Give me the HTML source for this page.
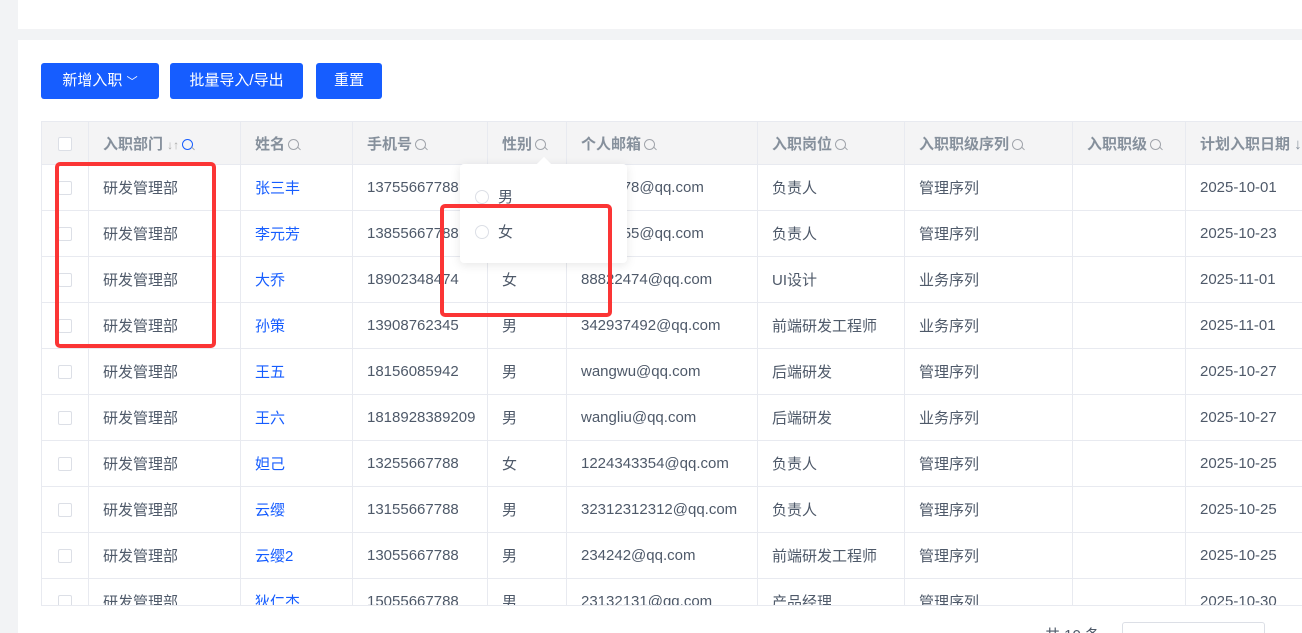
<!DOCTYPE html>
<html><head><meta charset="utf-8"><style>
*{box-sizing:border-box;margin:0;padding:0}
html,body{width:1302px;height:633px;overflow:hidden}
body{background:#f2f3f5;font-family:"Liberation Sans","Noto Sans CJK SC",sans-serif;font-size:15px;color:#4e5969;position:relative}
.top{position:absolute;left:18px;top:0;width:1284px;height:29px;background:#fff}
.card{position:absolute;left:18px;top:40px;width:1284px;height:593px;background:#fff}
.btn{position:absolute;top:63px;height:36px;background:#165dff;color:#fff;border-radius:3px;font-size:15px;line-height:36px;text-align:center}
table{border-collapse:collapse;table-layout:fixed;width:1274px}
td,th{border:1px solid #e8eaf0;height:46px;padding:0 0 0 14px;text-align:left;white-space:nowrap;overflow:hidden;font-weight:normal}
th{background:#f4f4f5;height:43px;color:#86909c;font-weight:bold}
td.l{color:#165dff}
.cb{display:inline-block;width:14px;height:14px;border:1px solid #dcdfe6;border-radius:2px;background:#fff;vertical-align:middle}
.q{display:inline-block;width:11px;height:11px;border:1.3px solid #a0a4ab;border-radius:50%;margin-left:3px;vertical-align:-1px;position:relative}
.q:after{content:"";position:absolute;width:4px;height:1.3px;background:#a0a4ab;right:-3px;bottom:-1px;transform:rotate(45deg)}
.clip{position:absolute;left:41px;top:121px;width:1261px;height:485px;overflow:hidden}
.pop{position:absolute;left:460px;top:164px;width:167px;height:99px;background:#fff;border-radius:4px;box-shadow:0 2px 10px rgba(0,0,0,.1)}
.pop:before{content:"";position:absolute;left:79px;top:-5px;width:10px;height:10px;background:#fff;transform:rotate(45deg)}
.r{position:absolute;left:15px;font-size:15px;color:#4e5969}
.r i{display:inline-block;width:14px;height:14px;border:1px solid #dcdfe6;border-radius:50%;vertical-align:-2px;margin-right:9px}
.red{position:absolute;border:4px solid #fb3535;border-radius:5px}
</style></head><body>
<div class="top"></div>
<div class="card"></div>
<div class="btn" style="left:41px;width:118px">新增入职 <span style="font-size:11px">﹀</span></div>
<div class="btn" style="left:170px;width:133px">批量导入/导出</div>
<div class="btn" style="left:316px;width:66px">重置</div>
<div class="clip"><table>
<colgroup><col style="width:47px"><col style="width:152px"><col style="width:112px"><col style="width:135px"><col style="width:79px"><col style="width:191px"><col style="width:147px"><col style="width:168px"><col style="width:113px"><col style="width:130px"></colgroup>
<tr><th style="padding-left:16px"><span class="cb"></span></th><th>入职部门 <span style="font-weight:normal;font-size:12px;color:#aaa">↓↑</span><span class="q" style="border-color:#165dff"></span></th><th>姓名<span class="q"></span></th><th>手机号<span class="q"></span></th><th>性别<span class="q"></span></th><th>个人邮箱<span class="q"></span></th><th>入职岗位<span class="q"></span></th><th>入职职级序列<span class="q"></span></th><th>入职职级<span class="q"></span></th><th>计划入职日期 ↓</th></tr>
<tr><td style="padding-left:16px"><span class="cb"></span></td><td>研发管理部</td><td class="l">张三丰</td><td>13755667788</td><td>男</td><td>5645678@qq.com</td><td>负责人</td><td>管理序列</td><td></td><td>2025-10-01</td></tr>
<tr><td style="padding-left:16px"><span class="cb"></span></td><td>研发管理部</td><td class="l">李元芳</td><td>13855667788</td><td>女</td><td>3455455@qq.com</td><td>负责人</td><td>管理序列</td><td></td><td>2025-10-23</td></tr>
<tr><td style="padding-left:16px"><span class="cb"></span></td><td>研发管理部</td><td class="l">大乔</td><td>18902348474</td><td>女</td><td>88822474@qq.com</td><td>UI设计</td><td>业务序列</td><td></td><td>2025-11-01</td></tr>
<tr><td style="padding-left:16px"><span class="cb"></span></td><td>研发管理部</td><td class="l">孙策</td><td>13908762345</td><td>男</td><td>342937492@qq.com</td><td>前端研发工程师</td><td>业务序列</td><td></td><td>2025-11-01</td></tr>
<tr><td style="padding-left:16px"><span class="cb"></span></td><td>研发管理部</td><td class="l">王五</td><td>18156085942</td><td>男</td><td>wangwu@qq.com</td><td>后端研发</td><td>管理序列</td><td></td><td>2025-10-27</td></tr>
<tr><td style="padding-left:16px"><span class="cb"></span></td><td>研发管理部</td><td class="l">王六</td><td>1818928389209</td><td>男</td><td>wangliu@qq.com</td><td>后端研发</td><td>业务序列</td><td></td><td>2025-10-27</td></tr>
<tr><td style="padding-left:16px"><span class="cb"></span></td><td>研发管理部</td><td class="l">妲己</td><td>13255667788</td><td>女</td><td>1224343354@qq.com</td><td>负责人</td><td>管理序列</td><td></td><td>2025-10-25</td></tr>
<tr><td style="padding-left:16px"><span class="cb"></span></td><td>研发管理部</td><td class="l">云缨</td><td>13155667788</td><td>男</td><td>32312312312@qq.com</td><td>负责人</td><td>管理序列</td><td></td><td>2025-10-25</td></tr>
<tr><td style="padding-left:16px"><span class="cb"></span></td><td>研发管理部</td><td class="l">云缨2</td><td>13055667788</td><td>男</td><td>234242@qq.com</td><td>前端研发工程师</td><td>管理序列</td><td></td><td>2025-10-25</td></tr>
<tr><td style="padding-left:16px"><span class="cb"></span></td><td>研发管理部</td><td class="l">狄仁杰</td><td>15055667788</td><td>男</td><td>23132131@qq.com</td><td>产品经理</td><td>管理序列</td><td></td><td>2025-10-30</td></tr>
</table></div>
<div style="position:absolute;left:41px;top:605px;width:1261px;height:1px;background:#e8eaf0"></div>
<div style="position:absolute;left:1045px;top:624px;color:#4e5969">共 10 条</div>
<div style="position:absolute;left:1122px;top:622px;width:143px;height:30px;border:1px solid #dcdfe6;border-radius:3px"></div>
<div class="pop"><div class="r" style="top:22px"><i></i>男</div><div class="r" style="top:57px"><i></i>女</div></div>
<div class="red" style="left:55px;top:162px;width:161px;height:186px"></div>
<div class="red" style="left:440px;top:204px;width:172px;height:113px"></div>
</body></html>
